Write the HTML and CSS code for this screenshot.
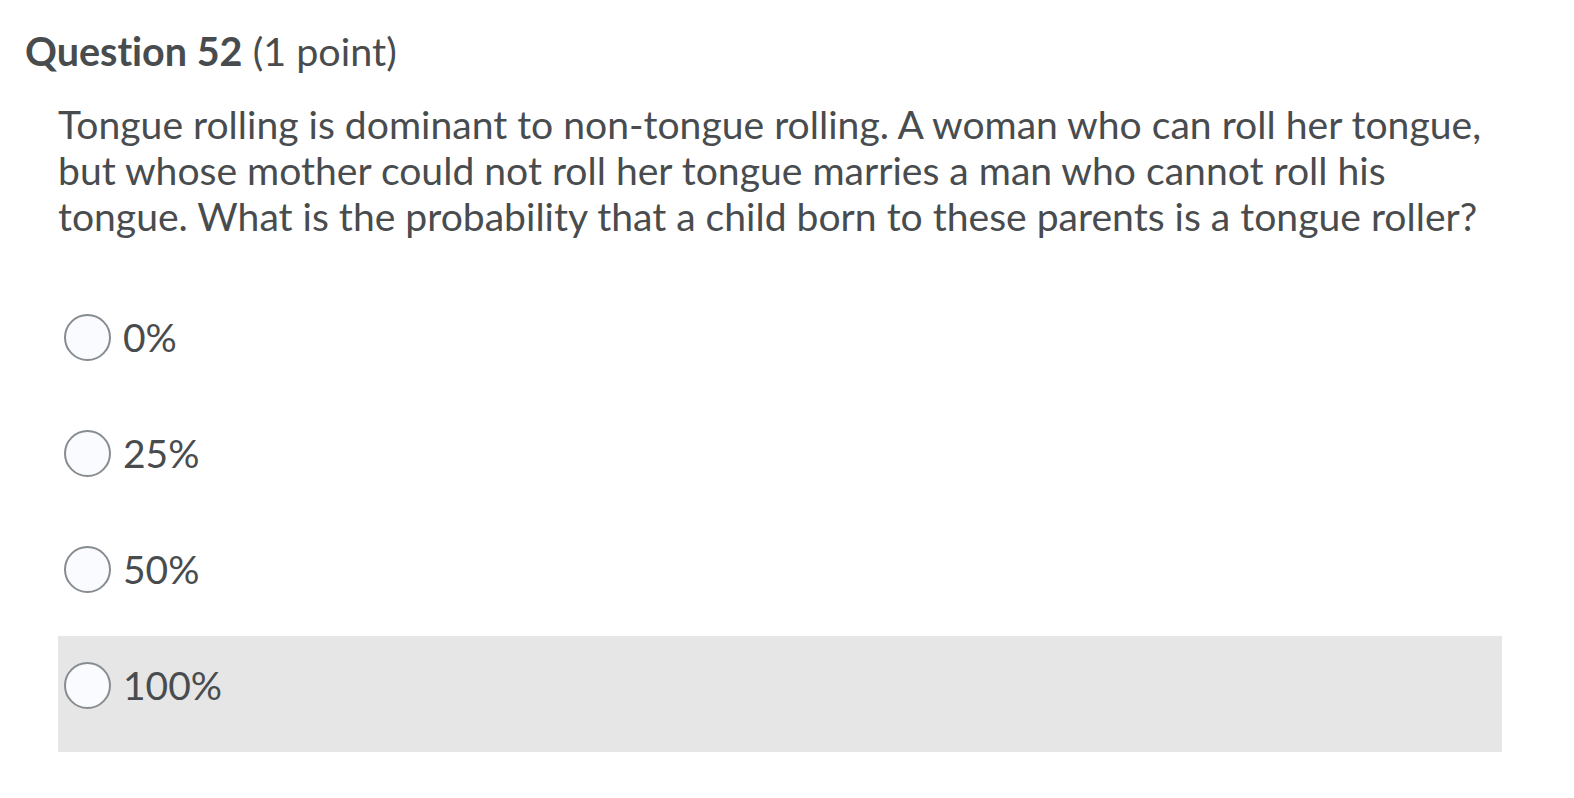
FILE: index.html
```html
<!DOCTYPE html>
<html lang="en">
<head>
<meta charset="utf-8">
<title>Question 52</title>
<link rel="stylesheet" href="styles.css">
</head>
<body>
<div class="page">
  <h2 class="title"><strong>Question 52</strong> <span class="points">(1 point)</span></h2>
  <div class="body">
    <p class="question">Tongue rolling is dominant to non-tongue rolling. A woman who can roll her tongue, but whose mother could not roll her tongue marries a man who cannot roll his tongue. What is the probability that a child born to these parents is a tongue roller?</p>
    <div class="options">
      <label class="option"><span class="radio"></span><span class="label">0%</span></label>
      <label class="option"><span class="radio"></span><span class="label">25%</span></label>
      <label class="option"><span class="radio"></span><span class="label">50%</span></label>
      <label class="option hover"><span class="radio"></span><span class="label">100%</span></label>
    </div>
  </div>
</div>
</body>
</html>
```
FILE: styles.css
```css
html, body {
  margin: 0;
  padding: 0;
  background: #ffffff;
}
body {
  font-family: Lato, "Open Sans", sans-serif;
  color: #494c4e;
  font-variant-ligatures: none;
}
.page {
  padding: 27px 72px 0 25px;
}
.title {
  margin: 0;
  font-size: 39.5px;
  line-height: 47px;
  font-weight: 400;
}
.title strong {
  font-weight: 700;
}
.body {
  padding-left: 33px;
  padding-top: 26.5px;
}
.question {
  margin: 0;
  font-size: 39.1px;
  line-height: 46.2px;
}
.options {
  margin-top: 49px;
  display: flex;
  flex-direction: column;
}
.option {
  height: 116px;
  box-sizing: border-box;
  padding: 26px 0 0 6px;
  display: flex;
  align-items: flex-start;
  gap: 12px;
}
.option.hover {
  background: #e6e6e6;
}
.radio {
  width: 47px;
  height: 47px;
  box-sizing: border-box;
  border: 2px solid #868c8f;
  border-radius: 50%;
  background: #f9fbff;
  flex: none;
}
.label {
  font-size: 39px;
  line-height: 47px;
}
```
